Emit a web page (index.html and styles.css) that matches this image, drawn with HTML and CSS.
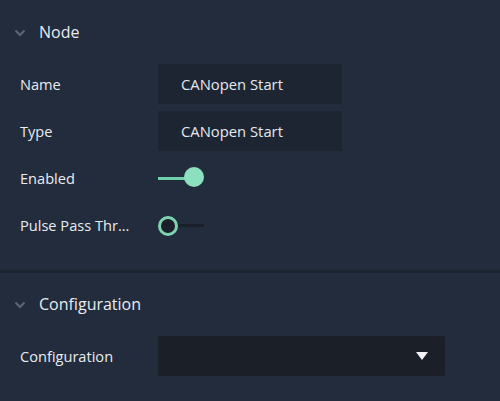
FILE: index.html
```html
<!DOCTYPE html>
<html>
<head>
<meta charset="utf-8">
<link rel="stylesheet" href="styles.css">
</head>
<body>
<div class="panel">
  <section class="section">
    <div class="header">
      <svg class="chev" width="12" height="8" viewBox="0 0 12 8"><path d="M1.5 1.5 L6 6 L10.5 1.5" fill="none" stroke="#5d6675" stroke-width="2"/></svg>
      <span class="title">Node</span>
    </div>
    <div class="rows">
      <div class="row"><span class="label">Name</span><div class="input">CANopen Start</div></div>
      <div class="row"><span class="label">Type</span><div class="input">CANopen Start</div></div>
      <div class="row"><span class="label">Enabled</span>
        <div class="toggle on"><span class="track"></span><span class="knob"></span></div>
      </div>
      <div class="row"><span class="label">Pulse Pass Thr...</span>
        <div class="toggle off"><span class="knob"></span><span class="track"></span></div>
      </div>
    </div>
  </section>
  <div class="divider"></div>
  <section class="section second">
    <div class="header">
      <svg class="chev" width="12" height="8" viewBox="0 0 12 8"><path d="M1.5 1.5 L6 6 L10.5 1.5" fill="none" stroke="#5d6675" stroke-width="2"/></svg>
      <span class="title">Configuration</span>
    </div>
    <div class="rows">
      <div class="row"><span class="label">Configuration</span>
        <div class="select"><svg width="12" height="8" viewBox="0 0 12 8"><path d="M0 0 H12 L6 8 Z" fill="#f2f2f6"/></svg></div>
      </div>
    </div>
  </section>
</div>
</body>
</html>
```
FILE: styles.css
```css
html, body {
  margin: 0;
  padding: 0;
  background: #222c3c;
}
body {
  font-family: "Open Sans", "Noto Sans", sans-serif;
  color: #e9ebef;
  width: 500px;
  height: 401px;
  overflow: hidden;
}
.panel {
  display: flex;
  flex-direction: column;
}
.section {
  padding-bottom: 26px;
}
.header {
  height: 62px;
  display: flex;
  align-items: center;
  padding-left: 14px;
}
.second .header {
  height: 61px;
}
.chev {
  margin-right: 13px;
  margin-top: 3px;
}
.title {
  font-size: 16px;
  line-height: 20px;
  margin-top: 1px;
}
.rows {
  margin-top: 2px;
  display: flex;
  flex-direction: column;
  gap: 7px;
}
.row {
  height: 40px;
  display: flex;
  align-items: center;
  padding-left: 20px;
}
.label {
  width: 138px;
  font-size: 14.6px;
  line-height: 18px;
  margin-top: -1px;
  white-space: nowrap;
}
.input {
  width: 161px;
  height: 40px;
  background: #1e2532;
  padding-left: 23px;
  display: flex;
  align-items: center;
  font-size: 14.8px;
  line-height: 18px;
  padding-bottom: 1px;
  box-sizing: content-box;
  height: 39px;
  color: #e4e8f0;
}
.toggle {
  display: flex;
  align-items: center;
  width: 46px;
}
.toggle.on .track {
  width: 28px;
  height: 3px;
  background: #6fcfa7;
}
.toggle.on .knob {
  width: 20px;
  height: 20px;
  border-radius: 50%;
  background: #8de0bd;
  margin-left: -2px;
  margin-top: -2px;
}
.toggle.off .knob {
  width: 14px;
  height: 14px;
  border-radius: 50%;
  border: 3px solid #7fd3ae;
  background: #1a1f29;
  margin-top: 1px;
}
.toggle.off .track {
  width: 26px;
  height: 3px;
  background: #1a1f29;
}
.divider {
  height: 3px;
  background: #1c2330;
  margin-top: -1px;
}
.select {
  width: 287px;
  height: 40px;
  background: #1a1f28;
  border-radius: 2px;
  display: flex;
  align-items: center;
  justify-content: flex-end;
  box-sizing: border-box;
}
.select svg {
  margin-right: 17px;
}
```
